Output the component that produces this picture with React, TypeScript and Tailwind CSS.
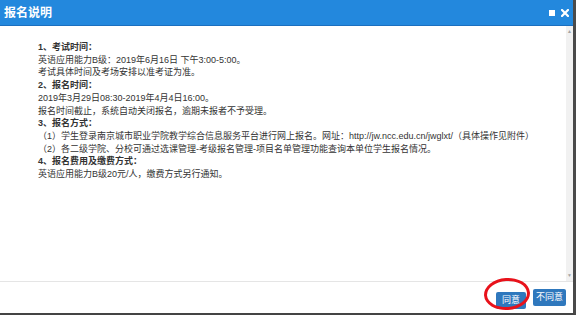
const LINES: { text: string; bold?: boolean }[] = [
  { text: "1、考试时间：", bold: true },
  { text: "英语应用能力B级：2019年6月16日 下午3:00-5:00。" },
  { text: "考试具体时间及考场安排以准考证为准。" },
  { text: "2、报名时间：", bold: true },
  { text: "2019年3月29日08:30-2019年4月4日16:00。" },
  { text: "报名时间截止，系统自动关闭报名，逾期未报者不予受理。" },
  { text: "3、报名方式：", bold: true },
  { text: "（1）学生登录南京城市职业学院教学综合信息服务平台进行网上报名。网址：http://jw.ncc.edu.cn/jwglxt/（具体操作见附件）" },
  { text: "（2）各二级学院、分校可通过选课管理-考级报名管理-项目名单管理功能查询本单位学生报名情况。" },
  { text: "4、报名费用及缴费方式：", bold: true },
  { text: "英语应用能力B级20元/人，缴费方式另行通知。" },
];

export default function App() {
  return (
    <div
      className="flex h-[315px] w-[576px] flex-col overflow-hidden border-r-[3px] border-b-[2px] border-r-[#4a4a4a] border-b-[#444] bg-white"
      style={{ fontFamily: '"Liberation Sans", "Noto Sans CJK SC", sans-serif' }}
    >
      <div className="flex h-[26px] shrink-0 items-center justify-between border-b border-[#1b6fbf] bg-[#2388dd] pl-[4px] pr-[4px]">
        <span className="text-[12px] font-bold leading-none text-white">报名说明</span>
        <div className="flex items-center gap-[6px]">
          <span className="block h-[6px] w-[6px] bg-white" />
          <svg width="8" height="8" viewBox="0 0 8 8">
            <path d="M1 1 L7 7 M7 1 L1 7" stroke="white" strokeWidth="2.2" strokeLinecap="square" />
          </svg>
        </div>
      </div>

      <div className="flex min-h-0 flex-1">
        <div className="flex-1 pl-[38px] pt-[15px] text-[9px] leading-[12.7px] text-[#333]">
          {LINES.map((line, i) => (
            <p key={i} className={line.bold ? "font-bold" : ""}>
              {line.text}
            </p>
          ))}
        </div>
        <div className="flex w-[7px] flex-col items-center justify-between bg-[#f1f1f1] py-[3px] text-[5px] leading-none text-[#a3a3a3]">
          <span>▲</span>
          <span>▼</span>
        </div>
      </div>

      <div className="flex h-[32px] shrink-0 items-center justify-end gap-[7px] border-t border-[#e5e5e5] pr-[7px]">
        <div className="relative">
          <button className="h-[17px] w-[30px] rounded-[2px] bg-[#2f78bd] text-[9px] leading-none text-white">同意</button>
          <span className="absolute -left-[12px] -top-[8px] h-[32px] w-[46px] -rotate-[4deg] rounded-[50%] border-[3px] border-[#e8121b]" />
        </div>
        <button className="h-[17px] w-[33px] rounded-[2px] bg-[#2f78bd] text-[9px] leading-none text-white">不同意</button>
      </div>
    </div>
  );
}
